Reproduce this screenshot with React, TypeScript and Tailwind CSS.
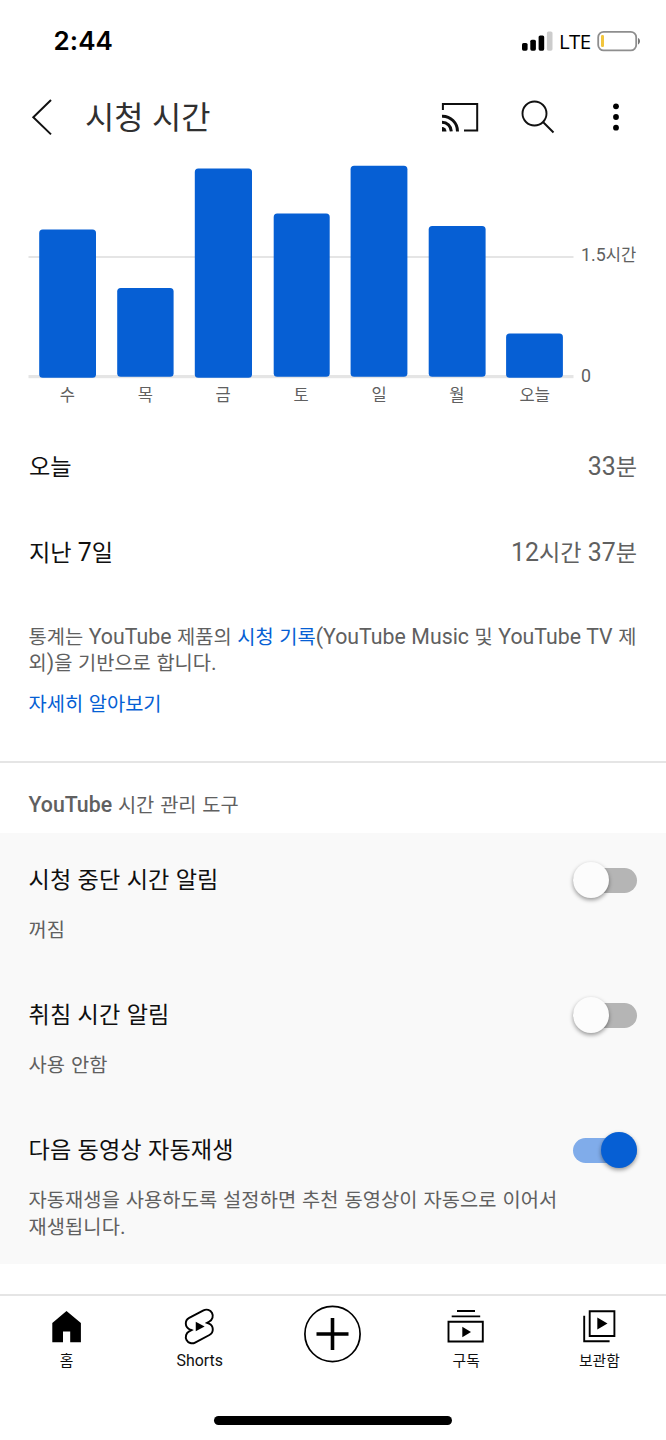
import { Fragment } from "react";

/* Hangul runs are set slightly smaller than the Latin text beside them. */
function T({ children }: { children: string }) {
  return (
    <>
      {children.split(/([가-힣]+)/).map((part, i) =>
        i % 2 ? (
          <span key={i} className="text-[0.93em] leading-none">{part}</span>
        ) : (
          <Fragment key={i}>{part}</Fragment>
        ),
      )}
    </>
  );
}

function StatusBar() {
  return (
    <div className="flex h-20 items-start justify-between pl-[53.500px] pr-[25px] text-black">
      <div className="pt-[25px] font-[Inter] text-[26px] font-semibold leading-8 tracking-[0.1px]">2:44</div>
      <div className="flex items-center pt-[29px]">
        <svg width="32" height="24" viewBox="0 0 32 24">
          <rect x="0" y="14" width="5.6" height="7.7" rx="1.6" />
          <rect x="8.3" y="10.7" width="5.6" height="11" rx="1.6" />
          <rect x="16.6" y="6.5" width="5.6" height="15.2" rx="1.6" />
          <rect x="24.9" y="2.5" width="5.6" height="19.2" rx="1.6" fill="#cccccc" />
        </svg>
        <span className="h-6 w-[43px] pl-[5px] font-['Open_Sans'] text-[20.500px] font-medium leading-6 tracking-[-0.6px]">LTE</span>
        <svg width="44" height="24" viewBox="0 0 44 24">
          <rect x="1.2" y="2.8" width="38" height="18.6" rx="5.5" fill="none" stroke="#8e8e8e" strokeWidth="1.8" />
          <rect x="4" y="6" width="3" height="12" rx="1.2" fill="#f2c53d" />
          <path d="M41 9c2.7 1 2.7 5.4 0 6.400z" fill="#777" />
        </svg>
      </div>
    </div>
  );
}

function Header() {
  return (
    <header className="flex h-[74px] items-center pl-[30px]">
      <svg width="24" height="40" viewBox="0 0 24 40" fill="none" stroke="#111" strokeWidth="2">
        <path d="M21 3 3.300 20.200 21 37.400" />
      </svg>
      <h1 className="grow pl-[31px] text-[34.200px] leading-[40px] text-[#303030]">
        <T>시청 시간</T>
      </h1>
      <svg width="40" height="34" viewBox="0 0 40 34" fill="none" stroke="#0f0f0f">
        <path d="M2.900 10V4.100H37.200V30.400H24" strokeWidth="2" />
        <path d="M2 16.300A15 15 0 0 1 17.500 31.400M2 22.200A9.400 9.400 0 0 1 11.300 31.400" strokeWidth="3" />
        <path d="M2 27A4.500 4.500 0 0 1 6.500 31.400H2z" fill="#0f0f0f" stroke="none" />
      </svg>
      <svg className="ml-[39px]" width="38" height="38" viewBox="0 0 38 38" fill="none" stroke="#111" strokeWidth="1.900">
        <circle cx="15.500" cy="15.500" r="12" />
        <path d="M24 24 34.500 34.500" />
      </svg>
      <svg className="ml-[53px] mr-[44px]" width="12" height="30" viewBox="0 0 12 30">
        <circle cx="6" cy="4.300" r="2.900" />
        <circle cx="6" cy="15" r="2.900" />
        <circle cx="6" cy="25.700" r="2.900" />
      </svg>
    </header>
  );
}

const bars = [
  { day: "수", x: 39.2, w: 56.8, top: 75.6, bottom: 223.8 },
  { day: "목", x: 117.2, w: 56.4, top: 134, bottom: 222.8 },
  { day: "금", x: 194.8, w: 57.2, top: 14.6, bottom: 223.8 },
  { day: "토", x: 273.7, w: 56, top: 59.5, bottom: 222.8 },
  { day: "일", x: 350.6, w: 56.8, top: 11.7, bottom: 222.8 },
  { day: "월", x: 428.7, w: 56.9, top: 72, bottom: 222.8 },
  { day: "오늘", x: 506.1, w: 56.8, top: 179.5, bottom: 223.8 },
];

function Chart() {
  return (
    <section className="h-[270px] text-[17.800px] leading-5 text-[#606060]">
      <div className="flex h-[226px]">
        <svg width="574" height="226" viewBox="0 0 574 226">
          <rect x="28.500" y="102" width="545" height="2" fill="#e5e5e5" />
          <rect x="28.500" y="221" width="545" height="3.200" fill="#e5e5e5" />
          {bars.map((b) => (
            <rect key={b.day} x={b.x} y={b.top} width={b.w} height={b.bottom - b.top} rx="3.500" fill="#065fd4" />
          ))}
        </svg>
        <div className="flex flex-col pl-[7px] pt-[91px]">
          <span className="h-[121px] shrink-0 whitespace-nowrap"><T>1.5시간</T></span>
          <span>0</span>
        </div>
      </div>
      <div className="flex pl-[28.500px] pt-[5px]">
        {bars.map((b) => (
          <span key={b.day} className="w-[77.900px] text-center"><T>{b.day}</T></span>
        ))}
      </div>
    </section>
  );
}

function StatRow({ label, value }: { label: string; value: string }) {
  return (
    <div className="flex h-[86px] items-center justify-between px-[29px] text-[24.900px]">
      <span className="text-[#0f0f0f]"><T>{label}</T></span>
      <span className="text-[#606060]"><T>{value}</T></span>
    </div>
  );
}

function Switch({ on }: { on?: boolean }) {
  return (
    <span
      className={
        on
          ? "flex h-[25px] w-16 items-center justify-end rounded-full bg-[#80acea]"
          : "flex h-[25px] w-16 items-center rounded-full bg-[#b5b5b5]"
      }
    >
      <span
        className={
          on
            ? "size-9 rounded-full bg-[#065fd4] shadow-[0_2px_4px_rgba(0,0,0,0.4)]"
            : "size-9 rounded-full bg-[#fcfcfc] shadow-[0_2px_4px_rgba(0,0,0,0.4)]"
        }
      />
    </span>
  );
}

function Setting({ title, lines, on }: { title: string; lines: string[]; on?: boolean }) {
  return (
    <div className="h-[135px] pl-[28.500px] pr-[28.600px] pt-[29px]">
      <div className="flex h-9 items-center justify-between">
        <span className="text-[24.900px] tracking-[0.1px] text-[#0f0f0f]"><T>{title}</T></span>
        <Switch on={on} />
      </div>
      <div className="pt-[19px] text-[21.300px] leading-[26.600px] tracking-[0.07px] text-[#606060] [word-spacing:0.5px]">
        {lines.map((l) => (
          <p key={l}><T>{l}</T></p>
        ))}
      </div>
    </div>
  );
}

function BottomNav() {
  return (
    <nav className="grid h-[104px] grid-cols-5 border-t-2 border-[#e5e5e5] pt-[9px] text-[15.900px] leading-[24px] text-[#0f0f0f]">
      <div className="flex flex-col items-center">
        <svg width="44" height="44" viewBox="0 0 44 44">
          <path d="M21.500 6 35.900 18V37.200H25.200V26.500H18V37.200H7.300V18z" fill="#000" />
        </svg>
        <span><T>홈</T></span>
      </div>
      <div className="flex flex-col items-center">
        <svg width="44" height="44" viewBox="0 -0.100 24.800 24.800">
          <path
            d="M17.770 10.320c-.77-.32-1.200-.5-1.200-.5L18 9.060c1.840-.96 2.530-3.230 1.560-5.060s-3.240-2.530-5.070-1.560L6 6.940c-1.290.68-2.070 2.040-2 3.490.07 1.420.93 2.670 2.220 3.250.03.01 1.200.5 1.200.5L6 14.930c-1.830.97-2.530 3.240-1.560 5.070.97 1.830 3.240 2.530 5.070 1.560l8.500-4.500c1.290-.68 2.060-2.040 1.990-3.490-.07-1.420-.94-2.680-2.230-3.250z"
            transform="translate(.6 .6) scale(.95)"
            fill="none"
            stroke="#000"
            strokeWidth="1.150"
          />
          <path d="M10 14.650v-5.300L15 12z" fill="#000" />
        </svg>
        <span>Shorts</span>
      </div>
      <div className="flex flex-col items-center">
        <svg width="58" height="58" viewBox="0 0 58 58" fill="none" stroke="#000">
          <circle cx="28.500" cy="29" r="27.600" strokeWidth="1.700" />
          <path d="M28.500 13V45M12.500 29H44.500" strokeWidth="3.600" />
        </svg>
      </div>
      <div className="flex flex-col items-center">
        <svg width="44" height="44" viewBox="0 -0.800 44 44" fill="none" stroke="#000" strokeWidth="1.900">
          <path d="M13 5.200H31M7.700 10.600H36.200M4.500 16H38.800V35.700H4.500z" />
          <path d="M18.300 21V31.400L27 26.200z" fill="#000" stroke="none" />
        </svg>
        <span><T>구독</T></span>
      </div>
      <div className="flex flex-col items-center">
        <svg width="44" height="44" viewBox="0 -0.800 44 44" fill="none" stroke="#000" strokeWidth="1.900">
          <path d="M12.700 5.400H37.400V30.200H12.700zM7.200 10V35.500H32.600" />
          <path d="M20.300 11.800V23.800L30.500 17.800z" fill="#000" stroke="none" />
        </svg>
        <span><T>보관함</T></span>
      </div>
    </nav>
  );
}

export default function App() {
  return (
    <div className="flex h-[1440px] w-[666px] flex-col overflow-hidden bg-white font-[Roboto,'Noto_Sans_CJK_KR',sans-serif]">
      <StatusBar />
      <Header />
      <Chart />
      <StatRow label="오늘" value="33분" />
      <StatRow label="지난 7일" value="12시간 37분" />
      <section className="h-[165px] whitespace-nowrap pl-[28.500px] pt-[28px] text-[21.300px] leading-[26px] text-[#606060] [word-spacing:0.3px]">
        <p>
          <T>통계는 YouTube 제품의 </T>
          <span className="text-[#065fd4]"><T>시청 기록</T></span>
          <T>(YouTube Music 및 YouTube TV 제</T>
        </p>
        <p><T>외)을 기반으로 합니다.</T></p>
        <p className="pt-[15px] text-[#065fd4]"><T>자세히 알아보기</T></p>
      </section>
      <section>
        <h2 className="flex h-[72px] items-center border-t-2 border-[#e5e5e5] pl-[28.500px] pt-[14px] text-[21.300px] text-[#606060] [word-spacing:0.5px]">
          <span className="font-medium">YouTube</span>
          <span className="whitespace-pre"><T> 시간 관리 도구</T></span>
        </h2>
        <div className="h-[431px] bg-[#f9f9f9]">
          <Setting title="시청 중단 시간 알림" lines={["꺼짐"]} />
          <Setting title="취침 시간 알림" lines={["사용 안함"]} />
          <Setting
            title="다음 동영상 자동재생"
            lines={["자동재생을 사용하도록 설정하면 추천 동영상이 자동으로 이어서", "재생됩니다."]}
            on
          />
        </div>
      </section>
      <div className="h-[30px] shrink-0" />
      <BottomNav />
      <div className="mx-auto mt-[18px] h-[9px] w-[238px] shrink-0 rounded-full bg-black" />
    </div>
  );
}
